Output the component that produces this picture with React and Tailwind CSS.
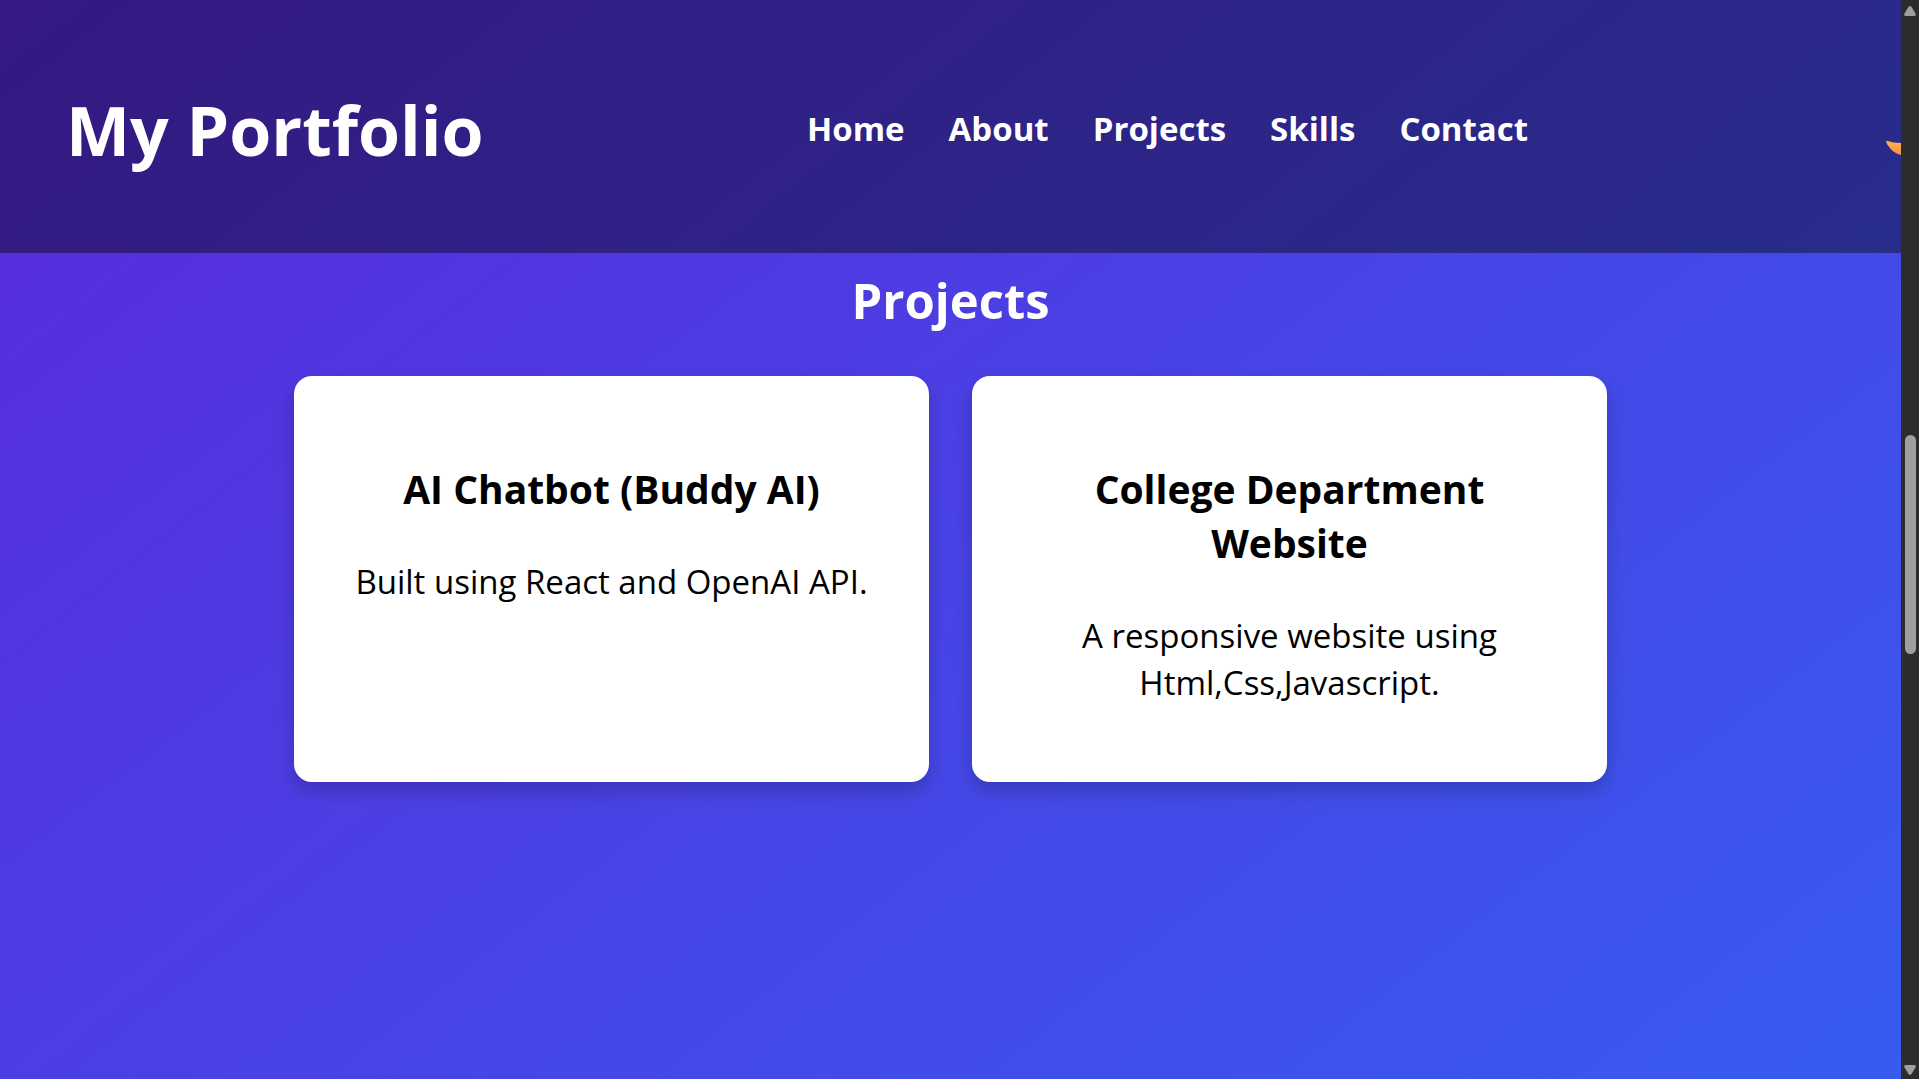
const links = ["Home", "About", "Projects", "Skills", "Contact"];

const projects = [
  { title: "AI Chatbot (Buddy AI)", text: "Built using React and OpenAI API." },
  {
    title: "College Department Website",
    text: "A responsive website using Html,Css,Javascript.",
  },
];

function Header() {
  return (
    <header className="flex items-start overflow-hidden bg-black/40 pt-[82px] pb-[75px] pl-[66px]">
      <h1 className="w-[741px] shrink-0 text-[68px] leading-[96px] font-bold whitespace-nowrap">
        My Portfolio
      </h1>
      <nav className="flex shrink-0 gap-11 pt-[22px] text-[33px] leading-[49px] font-bold">
        {links.map((name) => (
          <a key={name} href={"#" + name.toLowerCase()}>
            {name}
          </a>
        ))}
      </nav>
      <button
        type="button"
        aria-label="Toggle dark mode"
        className="-mr-10 ml-auto shrink-0 pt-8"
      >
        <svg width="56" height="44" viewBox="0 0 56 44">
          <defs>
            <linearGradient id="moon" x1="0" y1="0" x2="0" y2="1">
              <stop offset="0" stopColor="#ffc06a" />
              <stop offset="0.7" stopColor="#ffa850" />
              <stop offset="1" stopColor="#f98b3a" />
            </linearGradient>
          </defs>
          <path
            d="M3 27C1 26 1 28 2 30C5 35 9 39 16 41C19 42 21 43 25 43C37 43 46 33 46 21C46 12 41 4 33 1C31 0 30 2 31 3C38 15 30 29 16 29C10 29 6 28 3 27Z"
            fill="url(#moon)"
          />
        </svg>
      </button>
    </header>
  );
}

function Scrollbar() {
  return (
    <div
      aria-hidden="true"
      className="flex w-[18px] shrink-0 flex-col items-center justify-between bg-[#2c2c2c] pt-[6px] pb-1"
    >
      <svg width="12" height="10" viewBox="0 0 12 10">
        <path d="M4.500 1Q6 -1 7.500 1L11.500 7.500Q12.500 10 10 10H2Q-0.500 10 0.500 7.500Z" fill="#9f9f9f" />
      </svg>
      <div className="mt-2 h-[219px] w-[11px] rounded-full bg-[#9f9f9f]" />
      <svg width="12" height="10" viewBox="0 0 12 10">
        <path d="M4.500 9Q6 11 7.500 9L11.500 2.500Q12.500 0 10 0H2Q-0.500 0 0.500 2.500Z" fill="#9f9f9f" />
      </svg>
    </div>
  );
}

export default function App() {
  return (
    <div className="flex h-screen overflow-hidden font-['Open_Sans','Noto_Sans',sans-serif]">
      <div className="min-w-0 flex-1 overflow-hidden bg-[linear-gradient(142deg,#5a29da,#375bef)] text-white">
        <Header />
        <main className="pt-[11px]">
          <h2 className="text-center text-[49px] leading-[72px] font-bold">Projects</h2>
          <div className="mx-auto mt-10 grid w-[1313px] max-w-full grid-cols-2 gap-[43px]">
            {projects.map((p) => (
              <article
                key={p.title}
                className="rounded-[18px] bg-white px-11 pt-[86px] pb-[76px] text-center text-black shadow-[0_9px_18px_rgba(0,0,0,0.2)]"
              >
                <h3 className="text-[39px] leading-[54px] font-bold">{p.title}</h3>
                <p className="mt-[42px] text-[33px] leading-[47px] font-normal">{p.text}</p>
              </article>
            ))}
          </div>
        </main>
      </div>
      <Scrollbar />
    </div>
  );
}
